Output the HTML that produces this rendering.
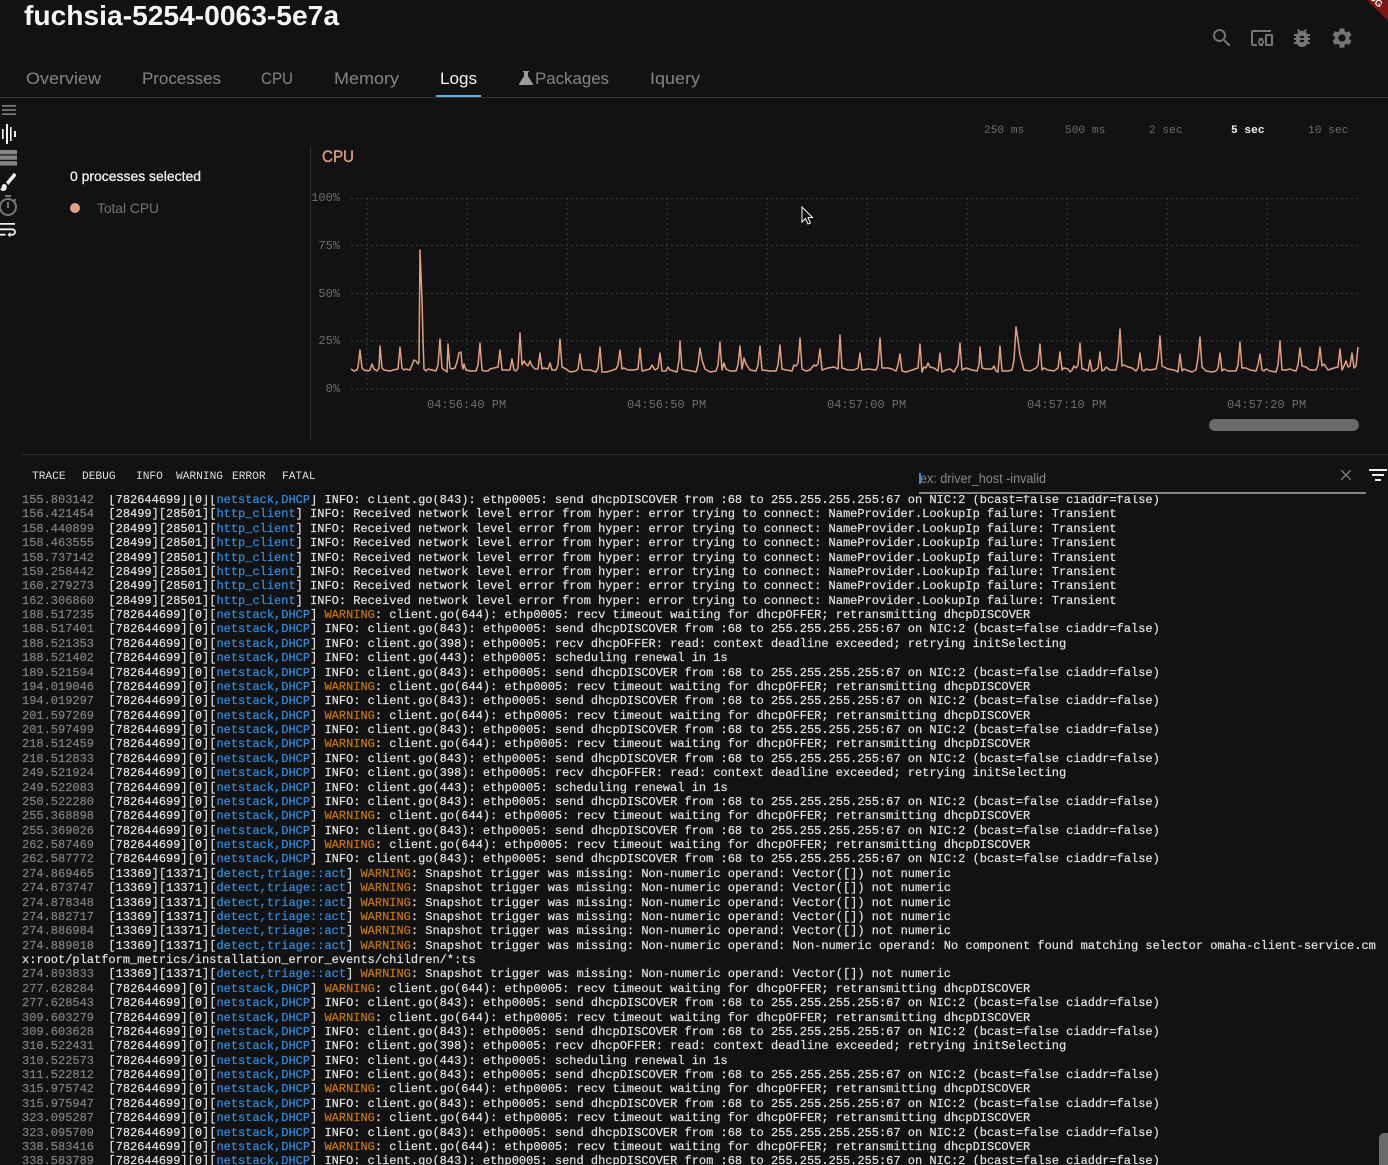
<!DOCTYPE html>
<html><head><meta charset="utf-8"><style>
html,body{margin:0;padding:0;background:#121212;width:1388px;height:1165px;overflow:hidden}
svg.o{position:absolute;left:0;top:0}
#log{position:absolute;left:0;top:495px;width:1388px;height:670px;overflow:hidden}
#log pre{margin:-1.9px 0 0 22px;font:12px/14.38px "Liberation Mono",monospace;color:#e2e2e2;-webkit-text-stroke:.2px #e2e2e2}
#log i{font-style:normal;color:#808080;-webkit-text-stroke:.2px #808080}
#log b{font-weight:normal;color:#2f8fe6;-webkit-text-stroke:.2px #2f8fe6}
#log u{text-decoration:none;color:#c9760c;-webkit-text-stroke:.2px #c9760c}
.s{font-family:"Liberation Sans",sans-serif}
.m{font-family:"Liberation Mono",monospace}
</style></head><body>
<svg class="o" width="1388" height="1165" viewBox="0 0 1388 1165">
<text class="s" x="24" y="25" font-size="28" font-weight="bold" fill="#f5f5f5" textLength="315" lengthAdjust="spacingAndGlyphs">fuchsia-5254-0063-5e7a</text>
<g class="s" font-size="17" fill="#858585">
<text x="26" y="84" textLength="75" lengthAdjust="spacingAndGlyphs">Overview</text>
<text x="142" y="84" textLength="79" lengthAdjust="spacingAndGlyphs">Processes</text>
<text x="261" y="84" textLength="32" lengthAdjust="spacingAndGlyphs">CPU</text>
<text x="334" y="84" textLength="65" lengthAdjust="spacingAndGlyphs">Memory</text>
<text x="440" y="84" textLength="37" fill="#f2f2f2" lengthAdjust="spacingAndGlyphs">Logs</text>
<text x="535" y="84" textLength="74" lengthAdjust="spacingAndGlyphs">Packages</text>
<text x="650" y="84" textLength="50" lengthAdjust="spacingAndGlyphs">Iquery</text>
</g>
<path d="M523 71h6v1h-1v4l5 8v1h-14v-1l5-8v-4h-1z" fill="#999"/>
<rect x="0" y="97" width="1388" height="1" fill="#363636"/>
<rect x="436" y="95" width="45" height="2" fill="#5cb0e4"/>
<g fill="#757575">
<path transform="translate(1210,26)" d="M15.5 14h-.79l-.28-.27C15.41 12.59 16 11.11 16 9.5 16 5.91 13.09 3 9.5 3S3 5.91 3 9.5 5.91 16 9.5 16c1.61 0 3.09-.59 4.23-1.57l.27.28v.79l5 4.99L20.49 19l-4.99-5zm-6 0C7.01 14 5 11.99 5 9.5S7.01 5 9.5 5 14 7.01 14 9.5 11.99 14 9.5 14z"/>
<path transform="translate(1250,26)" d="M3 6h18V4H3c-1.1 0-2 .9-2 2v12c0 1.1.9 2 2 2h4v-2H3V6zm10 6H9v1.78c-.61.55-1 1.33-1 2.22s.39 1.67 1 2.22V20h4v-1.78c.61-.55 1-1.34 1-2.22s-.39-1.67-1-2.22V12zm-2 5.5c-.83 0-1.5-.67-1.5-1.5s.67-1.5 1.5-1.5 1.5.67 1.5 1.5-.67 1.5-1.5 1.5zM22 8h-6c-.5 0-1 .5-1 1v10c0 .5.5 1 1 1h6c.5 0 1-.5 1-1V9c0-.5-.5-1-1-1zm-1 10h-4v-8h4v8z"/>
<path transform="translate(1290,26)" d="M20 8h-2.81c-.45-.78-1.07-1.45-1.82-1.96L17 4.41 15.59 3l-2.17 2.17C12.96 5.06 12.49 5 12 5c-.49 0-.96.06-1.41.17L8.41 3 7 4.41l1.62 1.63C7.88 6.55 7.26 7.22 6.81 8H4v2h2.09c-.05.33-.09.66-.09 1v1H4v2h2v1c0 .34.04.67.09 1H4v2h2.81c1.04 1.79 2.97 3 5.19 3s4.15-1.21 5.19-3H20v-2h-2.09c.05-.33.09-.66.09-1v-1h2v-2h-2v-1c0-.34-.04-.67-.09-1H20V8zm-6 8h-4v-2h4v2zm0-4h-4v-2h4v2z"/>
<path transform="translate(1330,26)" d="M19.14 12.94c.04-.3.06-.61.06-.94 0-.32-.02-.64-.07-.94l2.03-1.58c.18-.14.23-.41.12-.61l-1.92-3.32c-.12-.22-.37-.29-.59-.22l-2.39.96c-.5-.38-1.03-.7-1.62-.94l-.36-2.54c-.04-.24-.24-.41-.48-.41h-3.84c-.24 0-.43.17-.47.41l-.36 2.54c-.59.24-1.13.57-1.62.94l-2.39-.96c-.22-.08-.47 0-.59.22L2.74 8.87c-.12.21-.08.47.12.61l2.03 1.58c-.05.3-.09.63-.09.94s.02.64.07.94l-2.03 1.58c-.18.14-.23.41-.12.61l1.92 3.32c.12.22.37.29.59.22l2.39-.96c.5.38 1.03.7 1.62.94l.36 2.54c.05.24.24.41.48.41h3.84c.24 0 .44-.17.47-.41l.36-2.54c.59-.24 1.13-.56 1.62-.94l2.39.96c.22.08.47 0 .59-.22l1.92-3.32c.12-.22.07-.47-.12-.61l-2.01-1.58zM12 15.6c-1.98 0-3.6-1.62-3.6-3.6s1.62-3.6 3.6-3.6 3.6 1.62 3.6 3.6-1.62 3.6-3.6 3.6z"/>
</g>
<polygon points="1367,0 1388,21 1388,0" fill="#7a1616"/>
<text class="s" font-size="9.5" font-weight="bold" fill="#fff" text-anchor="end" transform="translate(1379,8) rotate(45)">DEBUG</text>
<g fill="#808080"><rect x="2" y="105" width="14" height="1.6"/><rect x="2" y="109.2" width="14" height="1.6"/><rect x="2" y="113.4" width="14" height="1.6"/></g>
<g fill="#f2f2f2"><rect x="2" y="129" width="1.6" height="10"/><rect x="6" y="124" width="2" height="20"/><rect x="10" y="127" width="1.6" height="14"/><rect x="14" y="131" width="2" height="6"/></g>
<g fill="#858585"><rect x="0" y="150" width="17" height="4.3"/><rect x="0" y="155.5" width="17" height="4.3"/><rect x="0" y="161.2" width="17" height="4.3"/></g>
<path transform="translate(-1.7,170) scale(.85,1)" fill="#eee" d="M7 14c-1.66 0-3 1.34-3 3 0 1.31-1.16 2-2 2 .92 1.22 2.49 2 4 2 2.21 0 4-1.79 4-4 0-1.66-1.34-3-3-3zm13.71-9.37l-1.34-1.34c-.39-.39-1.02-.39-1.41 0L9 12.25 11.75 15l8.96-8.96c.39-.39.39-1.03 0-1.41z"/>
<path transform="translate(-4,194)" fill="#777" d="M15 1H9v2h6V1zm-4 13h2V8h-2v6zm8.03-6.61l1.42-1.42c-.43-.51-.9-.99-1.41-1.41l-1.42 1.42C16.07 4.74 14.12 4 12 4c-4.97 0-9 4.03-9 9s4.02 9 9 9 9-4.03 9-9c0-2.12-.74-4.07-1.97-5.61zM12 20c-3.87 0-7-3.13-7-7s3.13-7 7-7 7 3.13 7 7-3.13 7-7 7z"/>
<path transform="translate(-4,218.5) scale(.95,.9)" fill="#eee" d="M4 19h6v-2H4v2zM20 5H4v2h16V5zm-3 6H4v2h13.25c1.1 0 2 .9 2 2s-.9 2-2 2H15v-2l-3 3 3 3v-2h2c2.21 0 4-1.79 4-4s-1.79-4-4-4z"/>
<text class="s" x="70" y="181" font-size="14" fill="#efefef" stroke="#efefef" stroke-width=".3" textLength="131" lengthAdjust="spacingAndGlyphs">0 processes selected</text>
<circle cx="75" cy="208" r="5" fill="#e5a082"/>
<text class="s" x="97" y="213" font-size="14" fill="#757575" textLength="62" lengthAdjust="spacingAndGlyphs">Total CPU</text>
<rect x="310" y="147" width="1" height="294" fill="#363636"/>
<text class="s" x="322" y="162" font-size="16.5" fill="#dd9a7d" stroke="#dd9a7d" stroke-width=".4" textLength="32" lengthAdjust="spacingAndGlyphs">CPU</text>
<g class="m" font-size="11.2" fill="#6e6e6e">
<text x="984" y="133">250 ms</text><text x="1065" y="133">500 ms</text><text x="1149" y="133">2 sec</text>
<text x="1231" y="133" fill="#f0f0f0" font-weight="bold">5 sec</text><text x="1308" y="133">10 sec</text>
</g>
<g stroke="#3c3c3c" stroke-width="1" stroke-dasharray="2 3" fill="none">
<path d="M351 198.5H1357M351 245.5H1357M351 293.5H1357M351 341H1357M351 389H1357"/>
<path d="M367 198V389M467 198V389M567 198V389M667 198V389M767 198V389M867 198V389M967 198V389M1067 198V389M1167 198V389M1267 198V389"/>
</g>
<g class="m" font-size="12" fill="#6e6e6e">
<g text-anchor="end"><text x="340" y="201">100%</text><text x="340" y="249">75%</text><text x="340" y="297">50%</text><text x="340" y="344">25%</text><text x="340" y="392">0%</text></g>
<text x="427" y="408">04:56:40 PM</text><text x="627" y="408">04:56:50 PM</text><text x="827" y="408">04:57:00 PM</text><text x="1027" y="408">04:57:10 PM</text><text x="1227" y="408">04:57:20 PM</text>
</g>
<polyline fill="none" stroke="#e5a082" stroke-width="1.5" stroke-linejoin="round" points="351,369 354,371 357,370 358,367 360,350 362,368 364,370 368,371 370,370 372,364 374,369 377,371 379,368 380,346 382,368 384,370 390,371 393,370 398,369 400,347 402,368 404,370 406,369 410,370 412,365 414,360 416,361 418,364 419,362 420,250 422,300 423,340 424,369 426,371 428,369 432,370 436,371 438,365 440,339 442,368 444,370 446,371 447,372 448,344 450,368 452,369 455,368 457,362 459,353 461,352 462,365 463,369 464,364 466,370 470,371 476,371 478,365 480,343 482,370 484,371 488,371 490,369 494,368 498,367 500,350 502,370 505,370 510,370 512,359 514,370 516,371 518,368 520,333 522,365 524,361 526,364 528,366 530,361 532,366 535,369 538,369 540,353 542,369 544,368 548,369 550,363 552,370 556,370 558,365 560,339 562,367 566,369 570,372 576,371 578,369 580,354 582,369 584,370 590,370 596,372 598,368 600,347 602,372 606,372 610,371 613,370 616,369 618,365 620,350 622,369 624,368 628,370 634,370 638,369 640,348 642,371 646,370 650,369 652,365 655,370 658,368 660,353 662,371 666,371 668,367 670,370 674,371 677,372 679,360 680,341 682,369 686,370 692,371 696,372 698,365 700,348 702,360 705,369 710,372 716,371 718,365 720,342 722,370 724,363 726,369 730,371 736,371 738,365 740,346 742,369 744,358 746,364 750,370 756,371 758,365 760,346 762,370 770,371 776,371 778,365 780,345 782,369 786,370 792,371 794,365 796,366 798,363 800,338 802,369 806,371 810,370 814,365 816,366 818,364 820,349 822,370 828,368 834,367 838,369 840,335 842,368 848,370 854,370 858,368 860,353 862,370 868,369 876,370 878,365 880,338 882,368 888,368 892,369 896,371 898,365 900,354 902,371 906,372 912,370 918,368 920,344 922,372 924,367 926,368 928,363 930,367 934,368 938,371 940,353 942,372 946,370 950,369 954,372 958,365 960,343 962,370 966,368 972,370 977,371 979,365 980,347 982,368 986,369 992,369 994,366 996,371 998,372 1000,346 1002,371 1008,371 1012,370 1014,360 1016,327 1018,340 1020,355 1024,370 1030,371 1034,369 1036,368 1038,365 1040,344 1042,370 1044,368 1048,370 1054,371 1058,368 1060,352 1062,370 1064,368 1068,369 1070,372 1072,370 1074,366 1076,368 1078,365 1080,343 1082,369 1084,369 1088,371 1090,360 1092,371 1094,371 1098,368 1100,352 1102,371 1104,370 1106,367 1110,370 1116,370 1118,360 1120,329 1122,366 1124,365 1128,367 1132,368 1136,371 1138,368 1140,353 1142,370 1144,371 1146,369 1150,370 1156,369 1158,360 1160,336 1162,366 1168,369 1174,370 1178,372 1180,354 1182,371 1184,369 1186,370 1192,372 1196,370 1198,358 1200,337 1202,367 1206,371 1212,372 1216,371 1218,368 1220,353 1222,371 1224,369 1228,371 1236,371 1238,365 1240,342 1242,368 1246,368 1250,370 1256,371 1258,365 1260,354 1262,370 1264,371 1266,369 1270,371 1276,372 1278,365 1280,341 1282,370 1286,370 1290,369 1292,370 1296,371 1298,365 1300,348 1302,366 1306,367 1310,370 1316,370 1318,365 1320,347 1322,366 1324,364 1328,370 1334,368 1338,367 1340,349 1342,370 1344,366 1346,361 1348,367 1350,366 1352,353 1354,368 1356,366 1358,347"/>
<rect x="1209" y="419" width="150" height="12" rx="6" fill="#6a6a6a"/>
<path d="M802 207v15l3.5-3.5 2.5 5.5 2.5-1-2.5-5.5h4.5z" fill="#111" stroke="#f5f5f5" stroke-width="1"/>
<rect x="22" y="454" width="1366" height="1" fill="#2c2c2c"/>
<g class="m" font-size="11.2" fill="#dedede">
<text x="32" y="479">TRACE</text><text x="82" y="479">DEBUG</text><text x="136" y="479">INFO</text><text x="176" y="479">WARNING</text><text x="232" y="479">ERROR</text><text x="282" y="479">FATAL</text>
</g>
<rect x="919" y="473" width="2" height="11" fill="#2f8fe6"/>
<text class="s" x="920" y="483" font-size="13.5" fill="#8a8a8a" textLength="126" lengthAdjust="spacingAndGlyphs">ex: driver_host -invalid</text>
<rect x="919" y="492" width="447" height="2" fill="#858585"/>
<path transform="translate(1337,466) scale(.75)" fill="#757575" d="M19 6.41L17.59 5 12 10.59 6.41 5 5 6.41 10.59 12 5 17.59 6.41 19 12 13.41 17.59 19 19 17.59 13.41 12z"/>
<g fill="#f0f0f0"><rect x="1369" y="469" width="18" height="2"/><rect x="1372" y="474" width="12" height="2"/><rect x="1375" y="479" width="6" height="2"/></g>
</svg>
<div id="log"><pre><i>155.803142</i>  [782644699][0][<b>netstack,DHCP</b>] INFO: client.go(843): ethp0005: send dhcpDISCOVER from :68 to 255.255.255.255:67 on NIC:2 (bcast=false ciaddr=false)
<i>156.421454</i>  [28499][28501][<b>http_client</b>] INFO: Received network level error from hyper: error trying to connect: NameProvider.LookupIp failure: Transient
<i>158.440899</i>  [28499][28501][<b>http_client</b>] INFO: Received network level error from hyper: error trying to connect: NameProvider.LookupIp failure: Transient
<i>158.463555</i>  [28499][28501][<b>http_client</b>] INFO: Received network level error from hyper: error trying to connect: NameProvider.LookupIp failure: Transient
<i>158.737142</i>  [28499][28501][<b>http_client</b>] INFO: Received network level error from hyper: error trying to connect: NameProvider.LookupIp failure: Transient
<i>159.258442</i>  [28499][28501][<b>http_client</b>] INFO: Received network level error from hyper: error trying to connect: NameProvider.LookupIp failure: Transient
<i>160.279273</i>  [28499][28501][<b>http_client</b>] INFO: Received network level error from hyper: error trying to connect: NameProvider.LookupIp failure: Transient
<i>162.306860</i>  [28499][28501][<b>http_client</b>] INFO: Received network level error from hyper: error trying to connect: NameProvider.LookupIp failure: Transient
<i>188.517235</i>  [782644699][0][<b>netstack,DHCP</b>] <u>WARNING</u>: client.go(644): ethp0005: recv timeout waiting for dhcpOFFER; retransmitting dhcpDISCOVER
<i>188.517401</i>  [782644699][0][<b>netstack,DHCP</b>] INFO: client.go(843): ethp0005: send dhcpDISCOVER from :68 to 255.255.255.255:67 on NIC:2 (bcast=false ciaddr=false)
<i>188.521353</i>  [782644699][0][<b>netstack,DHCP</b>] INFO: client.go(398): ethp0005: recv dhcpOFFER: read: context deadline exceeded; retrying initSelecting
<i>188.521402</i>  [782644699][0][<b>netstack,DHCP</b>] INFO: client.go(443): ethp0005: scheduling renewal in 1s
<i>189.521594</i>  [782644699][0][<b>netstack,DHCP</b>] INFO: client.go(843): ethp0005: send dhcpDISCOVER from :68 to 255.255.255.255:67 on NIC:2 (bcast=false ciaddr=false)
<i>194.019046</i>  [782644699][0][<b>netstack,DHCP</b>] <u>WARNING</u>: client.go(644): ethp0005: recv timeout waiting for dhcpOFFER; retransmitting dhcpDISCOVER
<i>194.019297</i>  [782644699][0][<b>netstack,DHCP</b>] INFO: client.go(843): ethp0005: send dhcpDISCOVER from :68 to 255.255.255.255:67 on NIC:2 (bcast=false ciaddr=false)
<i>201.597269</i>  [782644699][0][<b>netstack,DHCP</b>] <u>WARNING</u>: client.go(644): ethp0005: recv timeout waiting for dhcpOFFER; retransmitting dhcpDISCOVER
<i>201.597499</i>  [782644699][0][<b>netstack,DHCP</b>] INFO: client.go(843): ethp0005: send dhcpDISCOVER from :68 to 255.255.255.255:67 on NIC:2 (bcast=false ciaddr=false)
<i>218.512459</i>  [782644699][0][<b>netstack,DHCP</b>] <u>WARNING</u>: client.go(644): ethp0005: recv timeout waiting for dhcpOFFER; retransmitting dhcpDISCOVER
<i>218.512833</i>  [782644699][0][<b>netstack,DHCP</b>] INFO: client.go(843): ethp0005: send dhcpDISCOVER from :68 to 255.255.255.255:67 on NIC:2 (bcast=false ciaddr=false)
<i>249.521924</i>  [782644699][0][<b>netstack,DHCP</b>] INFO: client.go(398): ethp0005: recv dhcpOFFER: read: context deadline exceeded; retrying initSelecting
<i>249.522083</i>  [782644699][0][<b>netstack,DHCP</b>] INFO: client.go(443): ethp0005: scheduling renewal in 1s
<i>250.522280</i>  [782644699][0][<b>netstack,DHCP</b>] INFO: client.go(843): ethp0005: send dhcpDISCOVER from :68 to 255.255.255.255:67 on NIC:2 (bcast=false ciaddr=false)
<i>255.368898</i>  [782644699][0][<b>netstack,DHCP</b>] <u>WARNING</u>: client.go(644): ethp0005: recv timeout waiting for dhcpOFFER; retransmitting dhcpDISCOVER
<i>255.369026</i>  [782644699][0][<b>netstack,DHCP</b>] INFO: client.go(843): ethp0005: send dhcpDISCOVER from :68 to 255.255.255.255:67 on NIC:2 (bcast=false ciaddr=false)
<i>262.587469</i>  [782644699][0][<b>netstack,DHCP</b>] <u>WARNING</u>: client.go(644): ethp0005: recv timeout waiting for dhcpOFFER; retransmitting dhcpDISCOVER
<i>262.587772</i>  [782644699][0][<b>netstack,DHCP</b>] INFO: client.go(843): ethp0005: send dhcpDISCOVER from :68 to 255.255.255.255:67 on NIC:2 (bcast=false ciaddr=false)
<i>274.869465</i>  [13369][13371][<b>detect,triage::act</b>] <u>WARNING</u>: Snapshot trigger was missing: Non-numeric operand: Vector([]) not numeric
<i>274.873747</i>  [13369][13371][<b>detect,triage::act</b>] <u>WARNING</u>: Snapshot trigger was missing: Non-numeric operand: Vector([]) not numeric
<i>274.878348</i>  [13369][13371][<b>detect,triage::act</b>] <u>WARNING</u>: Snapshot trigger was missing: Non-numeric operand: Vector([]) not numeric
<i>274.882717</i>  [13369][13371][<b>detect,triage::act</b>] <u>WARNING</u>: Snapshot trigger was missing: Non-numeric operand: Vector([]) not numeric
<i>274.886984</i>  [13369][13371][<b>detect,triage::act</b>] <u>WARNING</u>: Snapshot trigger was missing: Non-numeric operand: Vector([]) not numeric
<i>274.889018</i>  [13369][13371][<b>detect,triage::act</b>] <u>WARNING</u>: Snapshot trigger was missing: Non-numeric operand: Non-numeric operand: No component found matching selector omaha-client-service.cm
x:root/platform_metrics/installation_error_events/children/*:ts
<i>274.893833</i>  [13369][13371][<b>detect,triage::act</b>] <u>WARNING</u>: Snapshot trigger was missing: Non-numeric operand: Vector([]) not numeric
<i>277.628284</i>  [782644699][0][<b>netstack,DHCP</b>] <u>WARNING</u>: client.go(644): ethp0005: recv timeout waiting for dhcpOFFER; retransmitting dhcpDISCOVER
<i>277.628543</i>  [782644699][0][<b>netstack,DHCP</b>] INFO: client.go(843): ethp0005: send dhcpDISCOVER from :68 to 255.255.255.255:67 on NIC:2 (bcast=false ciaddr=false)
<i>309.603279</i>  [782644699][0][<b>netstack,DHCP</b>] <u>WARNING</u>: client.go(644): ethp0005: recv timeout waiting for dhcpOFFER; retransmitting dhcpDISCOVER
<i>309.603628</i>  [782644699][0][<b>netstack,DHCP</b>] INFO: client.go(843): ethp0005: send dhcpDISCOVER from :68 to 255.255.255.255:67 on NIC:2 (bcast=false ciaddr=false)
<i>310.522431</i>  [782644699][0][<b>netstack,DHCP</b>] INFO: client.go(398): ethp0005: recv dhcpOFFER: read: context deadline exceeded; retrying initSelecting
<i>310.522573</i>  [782644699][0][<b>netstack,DHCP</b>] INFO: client.go(443): ethp0005: scheduling renewal in 1s
<i>311.522812</i>  [782644699][0][<b>netstack,DHCP</b>] INFO: client.go(843): ethp0005: send dhcpDISCOVER from :68 to 255.255.255.255:67 on NIC:2 (bcast=false ciaddr=false)
<i>315.975742</i>  [782644699][0][<b>netstack,DHCP</b>] <u>WARNING</u>: client.go(644): ethp0005: recv timeout waiting for dhcpOFFER; retransmitting dhcpDISCOVER
<i>315.975947</i>  [782644699][0][<b>netstack,DHCP</b>] INFO: client.go(843): ethp0005: send dhcpDISCOVER from :68 to 255.255.255.255:67 on NIC:2 (bcast=false ciaddr=false)
<i>323.095287</i>  [782644699][0][<b>netstack,DHCP</b>] <u>WARNING</u>: client.go(644): ethp0005: recv timeout waiting for dhcpOFFER; retransmitting dhcpDISCOVER
<i>323.095709</i>  [782644699][0][<b>netstack,DHCP</b>] INFO: client.go(843): ethp0005: send dhcpDISCOVER from :68 to 255.255.255.255:67 on NIC:2 (bcast=false ciaddr=false)
<i>338.583416</i>  [782644699][0][<b>netstack,DHCP</b>] <u>WARNING</u>: client.go(644): ethp0005: recv timeout waiting for dhcpOFFER; retransmitting dhcpDISCOVER
<i>338.583789</i>  [782644699][0][<b>netstack,DHCP</b>] INFO: client.go(843): ethp0005: send dhcpDISCOVER from :68 to 255.255.255.255:67 on NIC:2 (bcast=false ciaddr=false)</pre></div>
<div style="position:absolute;left:1379px;top:1133px;width:9px;height:32px;background:#6a6a6a;border-radius:5px 0 0 0"></div>
</body></html>
